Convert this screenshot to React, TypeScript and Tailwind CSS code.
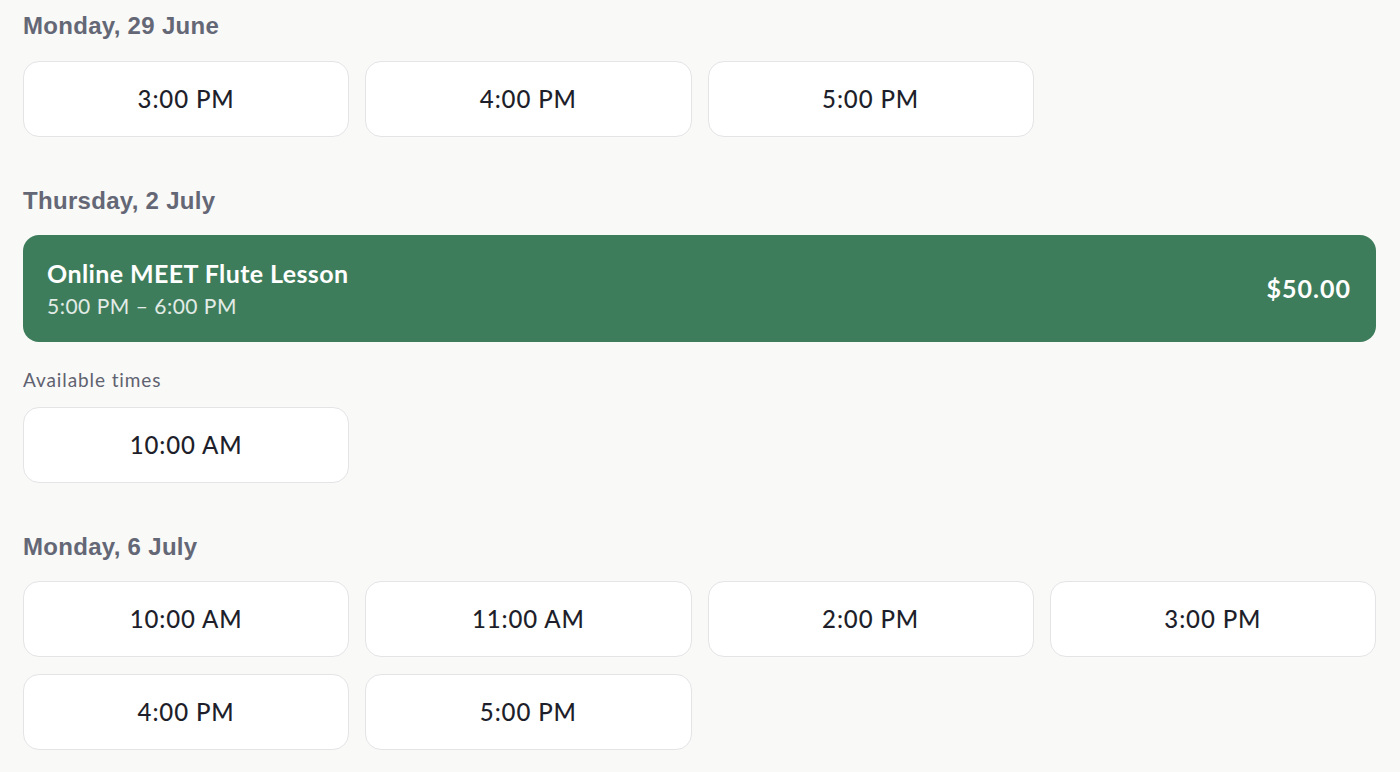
import React from "react";

const days: { label: string; times: string[] }[] = [
  { label: "Monday, 29 June", times: ["3:00 PM", "4:00 PM", "5:00 PM"] },
];

function TimeButton({ time }: { time: string }) {
  return (
    <button
      type="button"
      className="h-[76px] rounded-2xl border border-[#e4e4e7] bg-white text-[24px] font-medium tracking-[0.9px] text-[#1e1f2b] [font-family:Lato,'Open_Sans',sans-serif]"
    >
      {time}
    </button>
  );
}

function DayHeading({ children }: { children: React.ReactNode }) {
  return (
    <h2 className="text-[24px] leading-[28px] font-bold text-[#646775] [font-family:'Liberation_Sans',Arial,sans-serif] tracking-[0.3px]">
      {children}
    </h2>
  );
}

export default function App() {
  return (
    <div className="min-h-screen bg-[#f9f9f7] pl-[23px] pr-[24px] pt-[12px] pb-6 [font-family:Lato,sans-serif]">
      <section>
        <DayHeading>{days[0].label}</DayHeading>
        <div className="mt-[21px] grid grid-cols-4 gap-x-4 gap-y-[17px]">
          {days[0].times.map((t) => (
            <TimeButton key={t} time={t} />
          ))}
        </div>
      </section>

      <section className="mt-[50px]">
        <DayHeading>Thursday, 2 July</DayHeading>
        <div className="mt-[20px] flex h-[107px] items-center justify-between rounded-2xl bg-[#3e7d5b] pl-6 pr-[25px] text-white">
          <div>
            <div className="text-[25px] font-bold leading-[30px] tracking-[0.4px]">Online MEET Flute Lesson</div>
            <div className="mt-[5px] text-[21px] leading-[26px] tracking-[0.5px] text-white/85">5:00 PM – 6:00 PM</div>
          </div>
          <div className="text-[25px] font-bold tracking-[1px]">$50.00</div>
        </div>
        <div className="mt-[26px] text-[19px] leading-[24px] tracking-[0.9px] text-[#5f6270]">Available times</div>
        <div className="mt-[15px] grid grid-cols-4 gap-x-4 gap-y-[17px]">
          <TimeButton time="10:00 AM" />
        </div>
      </section>

      <section className="mt-[50px]">
        <DayHeading>Monday, 6 July</DayHeading>
        <div className="mt-[20px] grid grid-cols-4 gap-x-4 gap-y-[17px]">
          {["10:00 AM", "11:00 AM", "2:00 PM", "3:00 PM", "4:00 PM", "5:00 PM"].map((t) => (
            <TimeButton key={t} time={t} />
          ))}
        </div>
      </section>
    </div>
  );
}
